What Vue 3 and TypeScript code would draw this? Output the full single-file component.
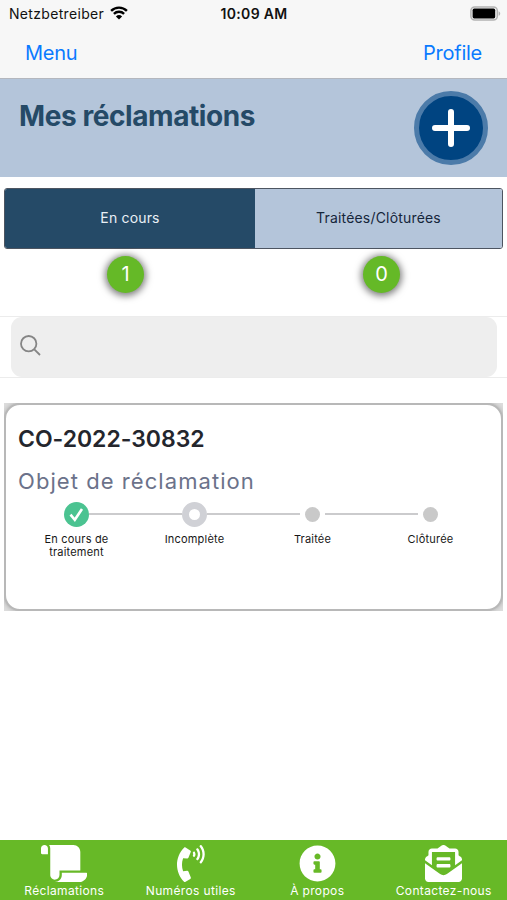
<script setup lang="ts">
interface Step {
  label: string
  state: 'done' | 'current' | 'pending'
}

interface Tab {
  name: string
  label: string
  viewBox: string
  path: string
}

const claim = { reference: 'CO-2022-30832', subject: 'Objet de réclamation' }

const steps: Step[] = [
  { label: 'En cours de traitement', state: 'done' },
  { label: 'Incomplète', state: 'current' },
  { label: 'Traitée', state: 'pending' },
  { label: 'Clôturée', state: 'pending' },
]

const tabs: Tab[] = [
  {
    name: 'claims',
    label: 'Réclamations',
    viewBox: '0 0 640 512',
    path: 'M48 0C21.53 0 0 21.53 0 48v64c0 8.84 7.16 16 16 16h80V48C96 21.53 74.47 0 48 0zm208 412.57V352h288V96c0-52.94-43.06-96-96-96H111.59C121.74 13.41 128 29.92 128 48v368c0 38.87 34.65 69.65 74.75 63.12C234.22 474 256 444.46 256 412.57zM288 384v32c0 52.93-43.06 96-96 96h336c61.86 0 112-50.14 112-112 0-8.84-7.16-16-16-16H288z',
  },
  {
    name: 'numbers',
    label: 'Numéros utiles',
    viewBox: '0 0 384 512',
    path: 'M97.333 506.966c-129.874-129.874-129.681-340.252 0-469.933 5.698-5.698 14.527-6.632 21.263-2.422l64.817 40.513a17.187 17.187 0 0 1 6.849 20.958l-32.408 81.021a17.188 17.188 0 0 1-17.669 10.719l-55.81-5.58c-21.051 58.261-20.612 122.471 0 179.515l55.811-5.581a17.188 17.188 0 0 1 17.669 10.719l32.408 81.022a17.188 17.188 0 0 1-6.849 20.958l-64.817 40.513a17.19 17.19 0 0 1-21.264-2.422zM247.126 95.473c11.832 20.047 11.832 45.008 0 65.055-3.95 6.693-13.108 7.959-18.718 2.581l-5.975-5.726c-3.911-3.748-4.793-9.622-2.261-14.41a32.063 32.063 0 0 0 0-29.945c-2.533-4.788-1.65-10.662 2.261-14.41l5.975-5.726c5.61-5.378 14.768-4.112 18.718 2.581zm91.787-91.187c60.14 71.604 60.092 175.882 0 247.428-4.474 5.327-12.53 5.746-17.552.933l-5.798-5.557c-4.56-4.371-4.977-11.529-.93-16.379 49.687-59.538 49.646-145.933 0-205.422-4.047-4.85-3.631-12.008.93-16.379l5.798-5.557c5.022-4.813 13.078-4.394 17.552.933zm-45.972 44.941c36.05 46.322 36.108 111.149 0 157.546-4.39 5.641-12.697 6.251-17.856 1.304l-5.818-5.579c-4.4-4.219-4.998-11.095-1.285-15.931 26.536-34.564 26.534-82.572 0-117.135-3.713-4.836-3.115-11.711 1.285-15.931l5.818-5.579c5.159-4.947 13.466-4.337 17.856 1.304z',
  },
  {
    name: 'about',
    label: 'À propos',
    viewBox: '0 0 512 512',
    path: 'M256 8C119.043 8 8 119.083 8 256c0 136.997 111.043 248 248 248s248-111.003 248-248C504 119.083 392.957 8 256 8zm0 110c23.196 0 42 18.804 42 42s-18.804 42-42 42-42-18.804-42-42 18.804-42 42-42zm56 254c0 6.627-5.373 12-12 12h-88c-6.627 0-12-5.373-12-12v-24c0-6.627 5.373-12 12-12h12v-64h-12c-6.627 0-12-5.373-12-12v-24c0-6.627 5.373-12 12-12h64c6.627 0 12 5.373 12 12v100h12c6.627 0 12 5.373 12 12v24z',
  },
  {
    name: 'contact',
    label: 'Contactez-nous',
    viewBox: '0 0 512 512',
    path: 'M176 216h160c8.84 0 16-7.16 16-16v-16c0-8.84-7.16-16-16-16H176c-8.84 0-16 7.16-16 16v16c0 8.84 7.16 16 16 16zm-16 80c0 8.84 7.16 16 16 16h160c8.84 0 16-7.16 16-16v-16c0-8.84-7.16-16-16-16H176c-8.84 0-16 7.16-16 16v16zm96 121.13c-16.42 0-32.84-5.06-46.86-15.19L0 250.86V464c0 26.51 21.49 48 48 48h416c26.51 0 48-21.49 48-48V250.86L302.86 401.94c-14.02 10.12-30.44 15.19-46.86 15.19zm237.61-254.18c-8.85-6.94-17.24-13.47-29.61-22.81V96c0-26.51-21.49-48-48-48h-77.55c-3.04-2.2-5.87-4.26-9.04-6.56C312.6 29.17 279.2-.35 256 0c-23.2-.35-56.59 29.17-73.41 41.44-3.17 2.3-6 4.36-9.04 6.56H96c-26.51 0-48 21.49-48 48v44.14c-12.37 9.33-20.76 15.87-29.61 22.81A47.995 47.995 0 0 0 0 200.72v10.65l96 69.35V96h320v184.72l96-69.35v-10.65c0-14.74-6.78-28.67-18.39-37.77z',
  },
]
</script>

<template>
  <div class="screen">
    <header class="top">
      <div class="status">
        <div class="carrier">
          <span>Netzbetreiber</span>
          <svg class="wifi" viewBox="0 0 18 14">
            <path d="M1.1 4.900a11.200 11.200 0 0 1 15.800 0M3.900 7.900a7.300 7.300 0 0 1 10.200 0" />
            <path class="wifi-dot" d="M9 13.600 5.900 10.400a4.600 4.600 0 0 1 6.200 0z" />
          </svg>
        </div>
        <span class="time">10:09 AM</span>
        <div class="battery-side">
          <svg class="battery" viewBox="0 0 31 15">
            <rect x="0.9" y="0.9" width="26.4" height="13.2" rx="3.8" />
            <rect class="battery-level" x="2.6" y="2.6" width="22.6" height="9.8" rx="1.6" />
            <path class="battery-cap" d="M28.600 5.200C30.700 6 30.700 9 28.600 9.800z" />
          </svg>
        </div>
      </div>
      <nav class="nav">
        <a>Menu</a>
        <a>Profile</a>
      </nav>
    </header>

    <section class="banner">
      <h1>Mes réclamations</h1>
      <button class="add" aria-label="Ajouter">
        <svg viewBox="0 0 38 38"><path d="M19 3v32M3 19h32" /></svg>
      </button>
    </section>

    <div class="segments">
      <div class="segment active">En cours</div>
      <div class="segment">Traitées/Clôturées</div>
    </div>
    <div class="counts">
      <div><span class="count">1</span></div>
      <div><span class="count">0</span></div>
    </div>

    <div class="search">
      <div class="field">
        <svg viewBox="0 0 21 21"><circle cx="8.700" cy="8.700" r="7.700" /><path d="M14.300 14.300 20 20" /></svg>
      </div>
    </div>

    <div class="card-frame">
      <article class="card">
        <h2>{{ claim.reference }}</h2>
        <p class="subject">{{ claim.subject }}</p>
        <ol class="steps">
          <li v-for="step in steps" :key="step.label" class="step" :class="step.state">
            <div class="track">
              <i class="line" />
              <span class="dot">
                <svg v-if="step.state === 'done'" viewBox="0 0 25 25"><path d="m6.500 12.600 4.300 5.200 7.200-10.800" /></svg>
              </span>
              <i class="line" />
            </div>
            <span class="step-label">{{ step.label }}</span>
          </li>
        </ol>
      </article>
    </div>

    <footer class="tabs">
      <div v-for="tab in tabs" :key="tab.name" class="tab" :class="tab.name">
        <svg :viewBox="tab.viewBox"><path :d="tab.path" /></svg>
        <span>{{ tab.label }}</span>
      </div>
    </footer>
  </div>
</template>

<style>
body {
  margin: 0;
  background: #fff;
}
</style>

<style scoped>
.screen {
  box-sizing: border-box;
  width: 507px;
  height: 900px;
  display: flex;
  flex-direction: column;
  overflow: hidden;
  background: #fff;
  color: #111;
  font-family: Inter, "Liberation Sans", sans-serif;
}
.top {
  box-sizing: border-box;
  height: 79px;
  flex: none;
  background: #f7f7f7;
  border-bottom: 1px solid #b4b7be;
}
.status {
  display: grid;
  grid-template-columns: 1fr auto 1fr;
  align-items: center;
  height: 27px;
  padding: 0 6px 0 9px;
  font-size: 14px;
  letter-spacing: 0.32px;
}
.carrier {
  display: flex;
  align-items: center;
  gap: 6px;
}
.wifi {
  width: 18px;
  height: 14px;
  margin-top: -2px;
  fill: none;
  stroke: #000;
  stroke-width: 2.4;
}
.wifi .wifi-dot {
  fill: #000;
  stroke: none;
}
.time {
  margin-left: -2px;
  font-weight: 600;
}
.battery-side {
  display: flex;
  justify-content: flex-end;
}
.battery {
  width: 31px;
  height: 15px;
  fill: none;
  stroke: #b3b3b3;
  stroke-width: 1.5;
}
.battery .battery-level {
  fill: #000;
  stroke: none;
}
.battery .battery-cap {
  fill: #b3b3b3;
  stroke: none;
}
.nav {
  display: flex;
  justify-content: space-between;
  align-items: center;
  height: 51px;
  padding: 0 25px 0 25px;
  font-size: 20px;
  letter-spacing: -0.25px;
  color: #0a7aff;
}
.banner {
  box-sizing: border-box;
  height: 98px;
  flex: none;
  display: flex;
  justify-content: space-between;
  align-items: flex-start;
  padding: 12px 19px 0 20px;
  background: #b4c5da;
}
h1 {
  margin: 7px 0 0 -1px;
  font-size: 28px;
  line-height: 36px;
  font-weight: 700;
  letter-spacing: -0.42px;
  color: #254a67;
}
.add {
  box-sizing: border-box;
  width: 74px;
  height: 74px;
  padding: 0;
  display: grid;
  place-items: center;
  border: 5px solid #4c7ba9;
  border-radius: 50%;
  background: #004481;
}
.add svg {
  width: 38px;
  height: 38px;
  fill: none;
  stroke: #fff;
  stroke-width: 6;
  stroke-linecap: round;
}
.segments {
  box-sizing: border-box;
  flex: none;
  display: grid;
  grid-template-columns: 250px 1fr;
  height: 61px;
  margin: 11px 4px 0 4px;
  border: 1px solid #4d5561;
  border-radius: 3px;
  overflow: hidden;
}
.segment {
  display: grid;
  place-items: center;
  padding-bottom: 2px;
  font-size: 14px;
  letter-spacing: 0.18px;
  color: #16263a;
  background: #b4c5da;
}
.segment.active {
  color: #e9f0f6;
  background: #254a67;
}
.counts {
  flex: none;
  display: grid;
  grid-template-columns: 251px 261px;
  height: 67px;
}
.counts div {
  display: flex;
  justify-content: center;
  padding-top: 7px;
}
.count {
  width: 37px;
  height: 37px;
  border-radius: 50%;
  background: #65b927;
  box-shadow: 0 1px 7px 2px rgba(0, 0, 0, 0.5);
  color: #fff;
  font-size: 20px;
  line-height: 37px;
  text-align: center;
}
.search {
  box-sizing: border-box;
  flex: none;
  height: 62px;
  padding: 0 10px 0 11px;
  border-top: 1px solid #ececec;
  border-bottom: 1px solid #ececec;
}
.field {
  box-sizing: border-box;
  display: flex;
  align-items: center;
  height: 60px;
  padding: 0 9px 3px;
  border-radius: 11px;
  background: #eee;
}
.field svg {
  width: 21px;
  height: 21px;
  fill: none;
  stroke: #858585;
  stroke-width: 1.8;
}
.card-frame {
  flex: none;
  height: 208px;
  margin: 25px 4px 0;
  background: #dcdcdc;
  overflow: hidden;
}
.card {
  box-sizing: border-box;
  height: 208px;
  padding: 18px 12px 0 12px;
  border: 2px solid #b8b8b8;
  border-radius: 16px;
  background: #fff;
  box-shadow: 0 0 4px rgba(0, 0, 0, 0.25);
}
h2 {
  margin: 0;
  font-size: 23px;
  line-height: 32px;
  font-weight: 600;
  letter-spacing: -0.03px;
  color: #24262d;
}
.subject {
  margin: 10px 0 0;
  font-size: 22px;
  line-height: 32px;
  letter-spacing: 1.06px;
  color: #6b728a;
}
.steps {
  display: flex;
  width: 472px;
  margin: 4px 0 0 -0.5px;
  padding: 0;
  list-style: none;
}
.step {
  width: 118px;
  display: flex;
  flex-direction: column;
  align-items: center;
}
.track {
  display: flex;
  align-items: center;
  justify-content: center;
  width: 100%;
  height: 26px;
}
.line {
  flex: 1;
  height: 2px;
  background: #cbcbcd;
}
.step:first-child .line:first-child,
.step:last-child .line:last-child {
  visibility: hidden;
}
.dot {
  box-sizing: border-box;
  display: block;
  width: 25px;
  height: 25px;
  border-radius: 50%;
  background: #4bc391;
}
.dot svg {
  display: block;
  fill: none;
  stroke: #fff;
  stroke-width: 2.6;
}
.current .dot {
  border: 7px solid #d0d1d6;
  background: #fff;
}
.pending .dot {
  width: 15px;
  height: 15px;
  margin: 0 5px;
  background: #c9c9c9;
}
.step-label {
  width: 76px;
  margin-top: 6px;
  font-size: 11px;
  line-height: 13px;
  letter-spacing: 0.2px;
  text-align: center;
  color: #171717;
}
.tabs {
  flex: none;
  box-sizing: border-box;
  display: grid;
  grid-template-columns: repeat(4, 1fr);
  height: 60px;
  margin-top: auto;
  padding: 5px 0 0 1px;
  background: #67b927;
  color: #fff;
}
.tab {
  display: flex;
  flex-direction: column;
  align-items: center;
  gap: 1px;
  font-size: 12px;
  line-height: 15px;
  letter-spacing: 0.35px;
  white-space: nowrap;
}
.tab svg {
  height: 37px;
  fill: #fff;
}
</style>
